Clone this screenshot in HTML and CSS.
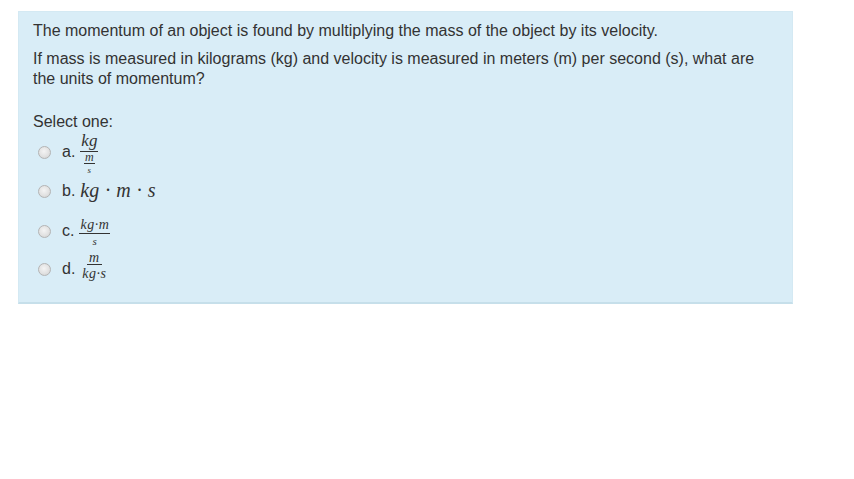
FILE: index.html
```html
<!DOCTYPE html>
<html>
<head>
<meta charset="utf-8">
<link rel="stylesheet" href="styles.css">
</head>
<body>
<div class="page">
  <div class="question">
    <p class="qtext">The momentum of an object is found by multiplying the mass of the object by its velocity.</p>
    <p class="qtext">If mass is measured in kilograms (kg) and velocity is measured in meters (m) per second (s), what are the units of momentum?</p>
    <div class="prompt">Select one:</div>
    <div class="answers">
      <div class="opt opt-a">
        <span class="radio"></span>
        <span class="label">a.</span>
        <span class="frac f-a">
          <span class="num">kg</span>
          <span class="den">
            <span class="frac f-inner"><span class="num">m</span><span class="den">s</span></span>
          </span>
        </span>
      </div>
      <div class="opt">
        <span class="radio"></span>
        <span class="label">b.</span>
        <span class="math big">kg · m · s</span>
      </div>
      <div class="opt">
        <span class="radio"></span>
        <span class="label">c.</span>
        <span class="frac f-c"><span class="num">kg·m</span><span class="den">s</span></span>
      </div>
      <div class="opt opt-d">
        <span class="radio"></span>
        <span class="label">d.</span>
        <span class="frac f-d"><span class="num">m</span><span class="den">kg·s</span></span>
      </div>
    </div>
  </div>
</div>
</body>
</html>
```

FILE: styles.css
```css
html, body {
  margin: 0;
  padding: 0;
  background: #ffffff;
}
body {
  font-family: "Liberation Sans", Arial, sans-serif;
  color: #333333;
  font-size: 16px;
}
.page {
  padding: 11px 0 0 18px;
}
.question {
  width: 745px;
  height: 281px;
  background: #d9edf7;
  border: 1px solid #d4e9f3;
  border-bottom: 2px solid #c6dfea;
  padding: 9px 14px 0 14px;
}
.qtext {
  margin: 0 0 8px 0;
  line-height: 20px;
}
.prompt {
  margin-top: 23px;
  line-height: 20px;
}
.answers {
  display: flex;
  flex-direction: column;
  margin-top: 1px;
}
.opt {
  display: flex;
  align-items: center;
  height: 40px;
}
.opt-a {
  height: 38px;
}
.opt-d {
  height: 36px;
}
.radio {
  width: 11px;
  height: 11px;
  border-radius: 50%;
  border: 1px solid #b4b4b4;
  background: radial-gradient(circle at 45% 40%, #f4f4f4 0%, #e2e2e2 55%, #cfcfcf 100%);
  margin-left: 5px;
  margin-right: 11px;
  flex: none;
}
.label {
  margin-right: 5px;
}
.math, .frac {
  font-family: "Liberation Serif", "Times New Roman", serif;
  font-style: italic;
  color: #333333;
}
.big {
  font-size: 20px;
  word-spacing: 1px;
  margin-top: -2px;
}
.frac {
  display: inline-flex;
  flex-direction: column;
  align-items: center;
  line-height: 1;
}
.frac > .num {
  border-bottom: 1px solid #333333;
  padding: 0 1px 1px 1px;
}
.frac > .den {
  padding-top: 1px;
}
.f-a {
  font-size: 17px;
  margin-top: 2px;
}
.f-a > .num {
  padding: 0 1px 0 1px;
  line-height: 20px;
}
.f-a > .den {
  padding-top: 1px;
  display: flex;
}
.f-inner {
  font-size: 12px;
}
.f-inner > .num {
  padding: 0 1px 1px 1px;
  line-height: 9px;
}
.f-inner > .den {
  font-size: 9px;
  line-height: 9px;
  padding-top: 2px;
}
.f-c, .f-d {
  font-size: 14px;
  letter-spacing: 0.5px;
}
.f-c {
  margin-top: 2px;
}
.f-c > .num {
  line-height: 16px;
  padding-bottom: 0;
}
.f-c > .den {
  font-size: 11px;
  padding-top: 2px;
}
.f-d {
  margin-top: -5px;
}
.f-d > .num {
  line-height: 12px;
  padding-bottom: 0;
}
.f-d > .den {
  line-height: 16px;
}
.f-d > .num, .f-d > .den {
  padding-left: 2px;
  padding-right: 2px;
}
```
